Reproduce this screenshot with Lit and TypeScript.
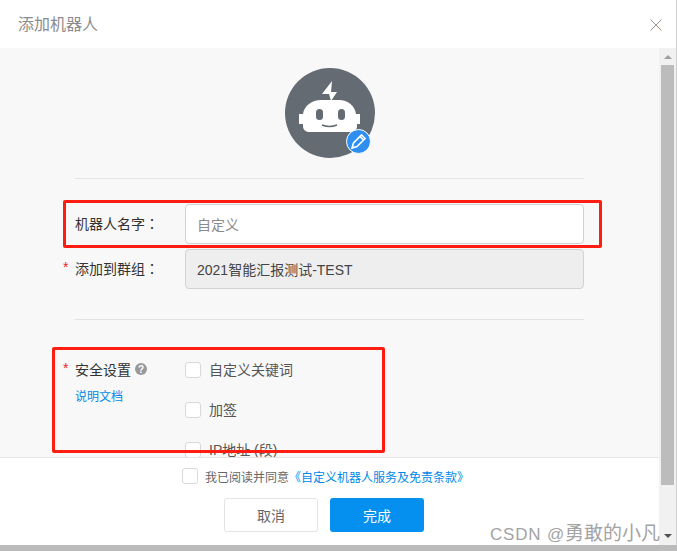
import { LitElement, html, css } from "lit";
import { customElement } from "lit/decorators.js";

const FONT = `"Liberation Sans", "Noto Sans CJK SC", sans-serif`;

@customElement("app-root")
export class AppRoot extends LitElement {
  static styles = css`
    :host {
      display: block;
      position: relative;
      width: 677px;
      height: 551px;
      overflow: hidden;
      background: #fff;
      font-family: "Liberation Sans", "Noto Sans CJK SC", sans-serif;
      font-size: 12px;
      color: #333;
    }
    * {
      box-sizing: border-box;
    }
    .dialog {
      display: flex;
      flex-direction: column;
      height: 545px;
      border-right: 1px solid #cfcfcf;
    }
    .header {
      flex: 0 0 48px;
      display: flex;
      align-items: center;
      justify-content: space-between;
      padding: 0 13px 2px 18px;
      background: #fff;
    }
    .title {
      font-size: 16px;
      color: #8c8c8c;
    }
    .close {
      width: 14px;
      height: 14px;
      display: block;
      margin-top: 4px;
    }
    .body {
      flex: 1;
      display: flex;
      min-height: 0;
    }
    .main {
      flex: 1;
      display: flex;
      flex-direction: column;
      min-width: 0;
    }
    .scroll {
      flex: 0 0 409px;
      overflow: hidden;
      padding: 20px 75px 0;
      background: #f8f8f8;
    }
    .avatar-wrap {
      display: flex;
      justify-content: center;
      padding: 0 0 20px 0;
      border-bottom: 1px solid #e3e3e3;
      margin-bottom: 25px;
    }
    .avatar {
      position: relative;
      width: 90px;
      height: 90px;
    }
    .avatar svg {
      display: block;
    }
    .edit {
      position: absolute;
      right: 4px;
      bottom: 4px;
    }
    .row {
      display: flex;
      height: 40px;
      margin-bottom: 5px;
      align-items: center;
    }
    .label {
      width: 110px;
      font-size: 14px;
      color: #333;
      position: relative;
      margin-top: -2px;
    }
    .colon {
      font-family: "Noto Sans CJK TC", sans-serif;
    }
    .star {
      position: absolute;
      left: -12px;
      top: 1px;
      color: #f5222d;
      font-size: 14px;
    }
    .field {
      flex: 1;
      height: 40px;
      border: 1px solid #d2d2d2;
      border-radius: 4px;
      display: flex;
      align-items: center;
      padding: 0 11px;
      font-size: 14px;
    }
    .field.input {
      background: #fff;
      color: #8a8a8a;
    }
    .field.disabled {
      background: #eeeeee;
      color: #444;
    }
    .divider {
      height: 1px;
      background: #e3e3e3;
      margin-top: 30px;
      margin-bottom: 40px;
    }
    .security {
      display: flex;
    }
    .sec-left {
      width: 110px;
      flex: none;
    }
    .sec-title {
      display: flex;
      align-items: center;
      gap: 4px;
      height: 20px;
      font-size: 14px;
      position: relative;
      margin-top: -1px;
    }
    .doc {
      display: block;
      margin-top: 8px;
      font-size: 12px;
      color: #0089e8;
    }
    .checks {
      display: flex;
      flex-direction: column;
      gap: 20px;
    }
    .check-row {
      display: flex;
      align-items: center;
      gap: 8px;
      height: 20px;
      font-size: 14px;
      color: #555;
    }
    .check-row span:last-child {
      margin-top: -2px;
    }
    .box {
      display: block;
      width: 16px;
      height: 16px;
      flex: none;
      background: #fff;
      border: 1px solid #d9d9d9;
      border-radius: 3px;
    }
    .sbar {
      flex: 0 0 17px;
      background: #f1f1f1;
      display: flex;
      flex-direction: column;
      align-items: center;
      padding: 7px 0;
    }
    .footer {
      flex: 1;
      border-top: 1px solid #e6e6e6;
      background: #fff;
      display: flex;
      flex-direction: column;
      align-items: center;
      padding-right: 11px;
    }
    .agree {
      display: flex;
      align-items: center;
      height: 36px;
      font-size: 12px;
      color: #666;
      gap: 7px;
      margin-left: 3px;
    }
    .agree a {
      color: #0089e8;
    }
    .buttons {
      display: flex;
      gap: 12px;
      margin-top: 4px;
    }
    .btn {
      width: 94px;
      height: 34px;
      border-radius: 3px;
      display: flex;
      align-items: center;
      justify-content: center;
      font-size: 14px;
    }
    .btn.cancel {
      background: #fff;
      border: 1px solid #e3e3e3;
      color: #666;
    }
    .btn.ok {
      background: #0590f0;
      color: #fff;
    }
    .strip {
      height: 6px;
      background: #bbb;
    }
    .thumb {
      width: 13px;
      height: 420px;
      background: #bcbcbc;
      margin-top: 6px;
    }
    .arrow-up {
      width: 0;
      height: 0;
      border-left: 4px solid transparent;
      border-right: 4px solid transparent;
      border-bottom: 4px solid #a0a0a0;
    }
    .arrow-down {
      width: 0;
      height: 0;
      border-left: 4px solid transparent;
      border-right: 4px solid transparent;
      border-top: 4px solid #505050;
      margin-top: auto;
    }
    .mark {
      position: absolute;
      border: 3px solid #ff1c10;
      border-radius: 2px;
    }
    .mark.one {
      left: 63px;
      top: 200px;
      width: 539px;
      height: 48px;
    }
    .mark.two {
      left: 52px;
      top: 347px;
      width: 333px;
      height: 106px;
    }
    .watermark {
      position: absolute;
      right: 17px;
      bottom: 6px;
      font-size: 17px;
      letter-spacing: 0.8px;
      color: #a3a3a3;
      white-space: nowrap;
    }
    .watermark span {
      font-size: 19px;
      letter-spacing: 0;
    }
  `;

  render() {
    return html`
      <div class="dialog">
        <div class="header">
          <span class="title">添加机器人</span>
          <svg class="close" viewBox="0 0 14 14">
            <path d="M1.5 1.5 12.5 12.5M12.5 1.5 1.5 12.5" stroke="#a09088" stroke-width="1" fill="none" />
          </svg>
        </div>
        <div class="body">
          <div class="main">
            <div class="scroll">
              <div class="avatar-wrap">
                <div class="avatar">
                  <svg width="90" height="90" viewBox="0 0 90 90">
                    <circle cx="45" cy="45" r="45" fill="#646b72" />
                    <path d="M47 13 37 26H44L46 33 52 24H46Z" fill="#fff" />
                    <path
                      d="M36 32H54C63 32 70 38 71 46H75V56H72V58C72 62 69 64 65 64H25C21 64 18 62 18 58V56H14V46H18C19 38 27 32 36 32Z"
                      fill="#fff"
                    />
                    <rect x="31" y="41" width="7" height="11" rx="3.5" fill="#646b72" />
                    <rect x="53" y="41" width="7" height="11" rx="3.5" fill="#646b72" />
                    <path d="M37 57C42 59 47 59 52 57" stroke="#646b72" stroke-width="1.5" fill="none" />
                  </svg>
                  <svg class="edit" width="25" height="25" viewBox="0 0 25 25">
                    <circle cx="12.5" cy="12.5" r="12" fill="#2f8ff0" stroke="#fff" stroke-width="1" />
                    <path d="M6 19 7.5 14 15.5 6 19 9.5 11 17.5Z" fill="none" stroke="#fff" stroke-width="1.6" />
                    <path d="M14 7.5 17.5 11" stroke="#fff" stroke-width="1.6" />
                  </svg>
                </div>
              </div>
              <div class="row">
                <div class="label">机器人名字<span class="colon">：</span></div>
                <div class="field input">自定义</div>
              </div>
              <div class="row">
                <div class="label"><span class="star">*</span>添加到群组<span class="colon">：</span></div>
                <div class="field disabled">2021智能汇报测试-TEST</div>
              </div>
              <div class="divider"></div>
              <div class="security">
                <div class="sec-left">
                  <div class="sec-title">
                    <span class="star">*</span>安全设置
                    <svg width="12" height="12" viewBox="0 0 12 12">
                      <circle cx="6" cy="6" r="6" fill="#999" />
                      <text x="6" y="9.5" text-anchor="middle" font-size="10" font-weight="700" fill="#fff" font-family=${FONT}>?</text>
                    </svg>
                  </div>
                  <a class="doc">说明文档</a>
                </div>
                <div class="checks">
                  <div class="check-row"><span class="box"></span><span>自定义关键词</span></div>
                  <div class="check-row"><span class="box"></span><span>加签</span></div>
                  <div class="check-row"><span class="box"></span><span>IP地址 (段)</span></div>
                </div>
              </div>
            </div>
            <div class="footer">
              <div class="agree">
                <span class="box"></span>
                <span>我已阅读并同意<a>《自定义机器人服务及免责条款》</a></span>
              </div>
              <div class="buttons">
                <div class="btn cancel">取消</div>
                <div class="btn ok">完成</div>
              </div>
            </div>
          </div>
          <div class="sbar">
            <div class="arrow-up"></div>
            <div class="thumb"></div>
            <div class="arrow-down"></div>
          </div>
        </div>
      </div>
      <div class="strip"></div>
      <div class="mark one"></div>
      <div class="mark two"></div>
      <div class="watermark">CSDN @<span>勇敢的小凡</span></div>
    `;
  }
}
